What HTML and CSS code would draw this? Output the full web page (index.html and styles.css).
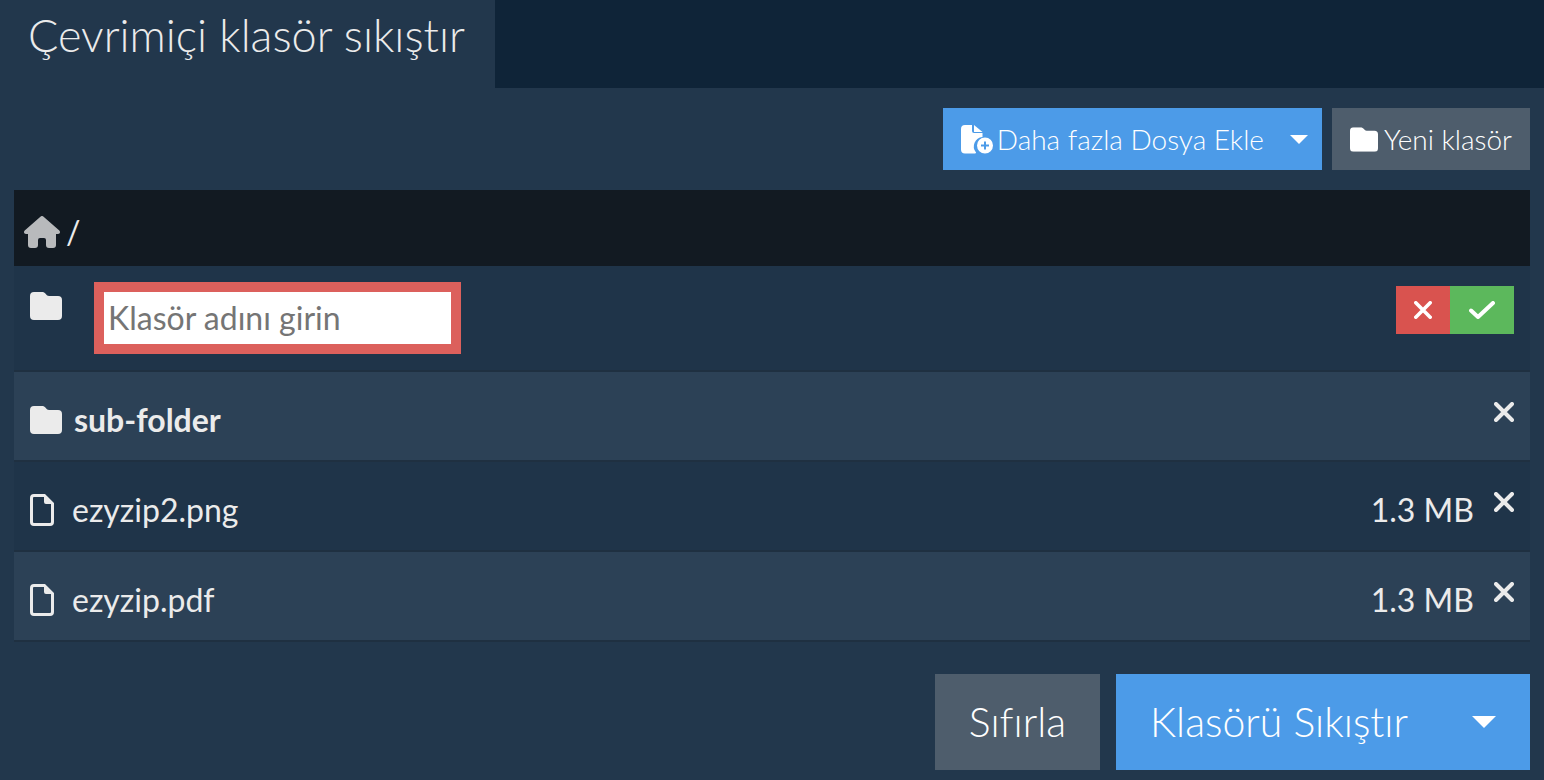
FILE: index.html
```html
<!DOCTYPE html>
<html lang="tr">
<head>
<meta charset="utf-8">
<meta name="viewport" content="width=device-width, initial-scale=1">
<title>Çevrimiçi klasör sıkıştır</title>
<link rel="stylesheet" href="styles.css">
</head>
<body>
<svg class="sprite" aria-hidden="true">
  <symbol id="folder" viewBox="0 0 32 28"><path d="M4 0h8c1.600 0 2.600.6 3.600 1.800C16.800 3.200 17.600 4 19 4h9a4 4 0 0 1 4 4v16a4 4 0 0 1-4 4H4a4 4 0 0 1-4-4V4a4 4 0 0 1 4-4z"/></symbol>
  <symbol id="file" viewBox="0 0 24 32"><path fill-rule="evenodd" d="M4 0h11l9 9v19a4 4 0 0 1-4 4H4a4 4 0 0 1-4-4V4a4 4 0 0 1 4-4zm0 3a1 1 0 0 0-1 1v24a1 1 0 0 0 1 1h16a1 1 0 0 0 1-1V10h-5a2 2 0 0 1-2-2V3z"/></symbol>
  <symbol id="cross" viewBox="0 0 20 20"><path d="M2 2l16 16M18 2L2 18" fill="none" stroke="currentColor" stroke-width="4" stroke-linecap="round"/></symbol>
</svg>
<header class="tabs">
  <h1 class="tab">Çevrimiçi klasör sıkıştır</h1>
</header>
<main class="panel">
  <div class="toolbar">
    <div class="split">
      <button class="btn btn-blue btn-add" type="button">
        <svg class="icon-add" viewBox="0 0 32 29" aria-hidden="true">
          <path d="M4 0h7v6a2 2 0 0 0 2 2h8.500v4A9.500 9.500 0 0 0 15 27.500V28a4 4 0 0 1-2 .5H4a4 4 0 0 1-4-4V4a4 4 0 0 1 4-4z"/>
          <path d="M13 0l8.500 7H13z"/>
          <path fill-rule="evenodd" d="M24 12.500a8 8 0 1 1 0 16 8 8 0 0 1 0-16zM23 16.500v3h-3v2h3v3h2v-3h3v-2h-3v-3z"/>
        </svg>
        Daha fazla Dosya Ekle
      </button>
      <button class="btn btn-blue btn-caret" type="button" aria-label="Diğer seçenekler"><svg class="caret" viewBox="0 0 18 9" aria-hidden="true"><path d="M0 0h18L9 9z"/></svg></button>
    </div>
    <button class="btn btn-grey btn-new" type="button"><svg class="icon-new" viewBox="0 0 32 28" aria-hidden="true"><use href="#folder"/></svg>Yeni klasör</button>
  </div>

  <nav class="path" aria-label="Konum">
    <a class="home" href="#" aria-label="Ana klasör"><svg class="icon-home" viewBox="0 0 36 32" aria-hidden="true"><path d="M16.700.5a2 2 0 0 1 2.600 0l16 14c1.400 1.300.6 3.500-1.300 3.500h-2v11a3 3 0 0 1-3 3h-4a3 3 0 0 1-3-3v-5a2 2 0 0 0-2-2h-4a2 2 0 0 0-2 2v5a3 3 0 0 1-3 3H7a3 3 0 0 1-3-3V18H2c-1.900 0-2.700-2.200-1.300-3.500z"/></svg></a>
    <span>/</span>
  </nav>

  <table class="files">
    <tbody>
      <tr class="row">
        <td class="name"><div class="edit">
          <svg class="icon-folder" viewBox="0 0 32 28" aria-hidden="true"><use href="#folder"/></svg>
          <input class="folder-input" type="text" placeholder="Klasör adını girin" aria-label="Klasör adı">
        </div></td>
        <td class="action" colspan="2"><div class="confirm">
          <button class="no" type="button" aria-label="İptal"><svg class="icon-no" viewBox="0 0 20 20" aria-hidden="true"><use href="#cross"/></svg></button>
          <button class="yes" type="button" aria-label="Onayla"><svg class="icon-yes" viewBox="0 0 26 18" aria-hidden="true"><path d="M2 9.500L9 16L24 2"/></svg></button>
        </div></td>
      </tr>
      <tr class="row">
        <td class="name"><div class="entry"><svg class="icon-folder" viewBox="0 0 32 28" aria-hidden="true"><use href="#folder"/></svg><strong>sub-folder</strong></div></td>
        <td class="size"></td>
        <td class="action"><button class="remove" type="button" aria-label="sub-folder sil"><svg class="icon-x" viewBox="0 0 20 20" aria-hidden="true"><use href="#cross"/></svg></button></td>
      </tr>
      <tr class="row">
        <td class="name"><div class="entry entry-file"><svg class="icon-file" viewBox="0 0 24 32" aria-hidden="true"><use href="#file"/></svg><span>ezyzip2.png</span></div></td>
        <td class="size">1.3 MB</td>
        <td class="action"><button class="remove" type="button" aria-label="ezyzip2.png sil"><svg class="icon-x" viewBox="0 0 20 20" aria-hidden="true"><use href="#cross"/></svg></button></td>
      </tr>
      <tr class="row">
        <td class="name"><div class="entry entry-file"><svg class="icon-file" viewBox="0 0 24 32" aria-hidden="true"><use href="#file"/></svg><span>ezyzip.pdf</span></div></td>
        <td class="size">1.3 MB</td>
        <td class="action"><button class="remove" type="button" aria-label="ezyzip.pdf sil"><svg class="icon-x" viewBox="0 0 20 20" aria-hidden="true"><use href="#cross"/></svg></button></td>
      </tr>
    </tbody>
  </table>

  <div class="footer">
    <button class="btn btn-grey btn-large" type="button">Sıfırla</button>
    <div class="split">
      <button class="btn btn-blue btn-large" type="button">Klasörü Sıkıştır</button>
      <button class="btn btn-blue btn-caret-large" type="button" aria-label="Diğer seçenekler"><svg class="caret-large" viewBox="0 0 24 12" aria-hidden="true"><path d="M0 0h24L12 12z"/></svg></button>
    </div>
  </div>
</main>
</body>
</html>
```
FILE: styles.css
```css
* {
  box-sizing: border-box;
}

body {
  margin: 0;
  min-height: 100vh;
  background: #22374c;
  color: #ebebeb;
  font-family: Lato, "Open Sans", sans-serif;
  font-size: 32px;
  font-variant-ligatures: none;
  line-height: 40px;
}

button {
  margin: 0;
  border: 0;
  padding: 0;
  background: none;
  color: inherit;
  font: inherit;
  font-variant-ligatures: none;
  cursor: pointer;
}

svg {
  display: block;
  flex: none;
  fill: currentColor;
}

.sprite {
  position: absolute;
  width: 0;
  height: 0;
}

.tabs {
  display: flex;
  background: #0f2438;
}

.tab {
  margin: 0;
  padding: 8px 30px 26px 28px;
  background: #22374c;
  font-size: 45px;
  font-weight: 300;
  line-height: 54px;
}

.panel {
  padding: 20px 14px 10px;
}

.toolbar,
.footer {
  display: flex;
  justify-content: flex-end;
}

.toolbar {
  gap: 10px;
  margin-bottom: 20px;
}

.split {
  display: flex;
}

.btn {
  display: flex;
  align-items: center;
  color: #fff;
  font-size: 28px;
  font-weight: 300;
  line-height: 34px;
  white-space: nowrap;
}

.btn-blue {
  background: #4c9be8;
}

.btn-grey {
  background: #4e5d6c;
}

.btn-add {
  gap: 4px;
  padding: 14px 12px 14px 18px;
}

.btn-caret {
  padding: 0 14px;
}

.btn-new {
  gap: 6px;
  padding: 14px 18px;
}

.icon-add {
  width: 32px;
  height: 29px;
}

.icon-new {
  width: 28px;
  height: 25px;
}

.caret {
  width: 18px;
  height: 9px;
}

.path {
  display: flex;
  align-items: center;
  gap: 6px;
  padding: 22px 10px 14px;
  background: #121a22;
}

.home {
  color: #b8babc;
}

.icon-home {
  width: 36px;
  height: 32px;
}

.files {
  width: 100%;
  border-collapse: collapse;
}

.row {
  border-bottom: 2px solid #1f3041;
  background: #1f3449;
}

.row:nth-child(even) {
  background: #2c4156;
}

.files td {
  padding: 0;
}

.name {
  width: 100%;
}

.entry {
  display: flex;
  align-items: center;
  gap: 12px;
  padding: 28px 16px 20px;
}

.entry-file {
  gap: 18px;
}

.icon-folder {
  width: 32px;
  height: 28px;
}

.icon-file {
  width: 24px;
  height: 32px;
}

.files .size {
  padding-top: 8px;
  white-space: nowrap;
}

.action {
  vertical-align: top;
}

.remove {
  display: block;
  margin-left: auto;
  padding: 30px 16px 20px 20px;
}

.icon-x {
  width: 20px;
  height: 20px;
}

.edit {
  display: flex;
  align-items: flex-start;
  gap: 32px;
  padding: 16px;
}

.edit .icon-folder {
  margin-top: 10px;
}

.folder-input {
  width: 367px;
  border: 10px solid #dc605c;
  border-radius: 0;
  padding: 6px 4px;
  background: #fff;
  color: #333;
  font: inherit;
  outline: 0;
}

.folder-input::placeholder {
  color: #757575;
  opacity: 1;
}

.confirm {
  display: flex;
  justify-content: flex-end;
  padding: 20px 16px 0 0;
  color: #fff;
}

.no,
.yes {
  display: grid;
  place-items: center;
  height: 48px;
}

.no {
  width: 54px;
  background: #d9534f;
}

.yes {
  width: 64px;
  background: #5cb85c;
}

.icon-no {
  width: 18px;
  height: 18px;
}

.icon-yes {
  width: 26px;
  height: 18px;
  fill: none;
  stroke: currentColor;
  stroke-width: 4;
  stroke-linecap: round;
  stroke-linejoin: round;
}

.footer {
  gap: 16px;
  margin-top: 32px;
}

.btn-large {
  padding: 24px 34px;
  font-size: 41px;
  line-height: 48px;
}

.btn-caret-large {
  padding: 0 34px 0 30px;
}

.caret-large {
  width: 24px;
  height: 12px;
}
```
